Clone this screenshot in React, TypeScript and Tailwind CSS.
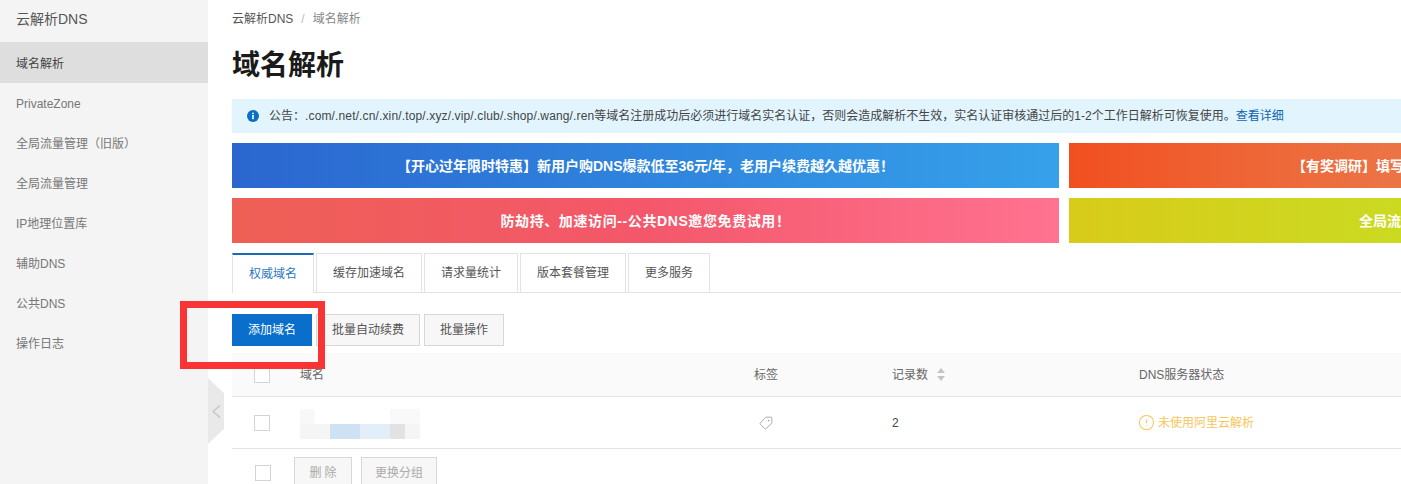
import { CircleAlert, Tag } from 'lucide-react';

// full-width punctuation is written as escapes so it survives copying
const COMMA = '\uFF0C';
const COLON = '\uFF1A';
const BANG = '\uFF01';

const menu = ['域名解析', 'PrivateZone', '全局流量管理\uFF08旧版\uFF09', '全局流量管理', 'IP地理位置库', '辅助DNS', '公共DNS', '操作日志'];
const tabs = [
  { label: '权威域名', width: 'w-[82px]' },
  { label: '缓存加速域名', width: 'w-[106px]' },
  { label: '请求量统计', width: 'w-[94px]' },
  { label: '版本套餐管理', width: 'w-[106px]' },
  { label: '更多服务', width: 'w-[82px]' },
];
const suffixes = '.com/.net/.cn/.xin/.top/.xyz/.vip/.club/.shop/.wang/.ren';
const notice = `等域名注册成功后必须进行域名实名认证${COMMA}否则会造成解析不生效${COMMA}实名认证审核通过后的1-2个工作日解析可恢复使用\u3002`;

function Checkbox() {
  return <span className="block h-4 w-4 border border-[#d4d4d4] bg-white" />;
}

function Sidebar() {
  return (
    <aside className="h-full w-[208px] shrink-0 bg-[#f4f4f4]">
      <div className="flex h-[42px] items-center pb-[4px] pl-4 text-[14px] text-[#555]">云解析DNS</div>
      <ul>
        {menu.map((item, i) => (
          <li
            key={item}
            className={
              i === 0
                ? 'flex h-[41px] items-center bg-[#dedede] pl-4 pt-[3px] text-xs text-[#444]'
                : 'flex h-10 items-center pl-4 pt-[1px] text-xs text-[#777]'
            }
          >
            {item}
          </li>
        ))}
      </ul>
    </aside>
  );
}

function Banners() {
  return (
    <div className="mt-[10px] grid w-[1664px] grid-cols-[827px_827px] gap-[10px] text-sm font-bold text-white">
      <div className="flex h-[45px] items-center justify-center bg-gradient-to-r from-[#2b66cf] to-[#36a1ea]">
        {`【开心过年限时特惠】新用户购DNS爆款低至36元/年${COMMA}老用户续费越久越优惠${BANG}`}
      </div>
      <div className="flex h-[45px] items-center bg-gradient-to-r from-[#f14f1f] to-[#dda171] pl-[223px]">
        【有奖调研】填写
      </div>
      <div className="flex h-[45px] items-center justify-center bg-gradient-to-r from-[#ee5f55] via-[#f4576a] to-[#ff7290] tracking-[0.6px]">
        {`防劫持、加速访问--公共DNS邀您免费试用${BANG}`}
      </div>
      <div className="flex h-[45px] items-center bg-gradient-to-r from-[#d8cb1a] to-[#b2f029] pl-[290px]">全局流</div>
    </div>
  );
}

function Tabs() {
  return (
    <div className="mt-[10px] flex h-10 gap-[2px] border-b border-[#e3e3e3] text-xs text-[#555]">
      {tabs.map((tab, i) => (
        <div
          key={tab.label}
          className={
            i === 0
              ? `flex h-10 items-center justify-center border-x border-t-2 border-x-[#e3e3e3] border-t-[#1c69b5] bg-white text-[#2b78c5] ${tab.width}`
              : `flex h-[39px] items-center justify-center border border-b-0 border-[#e3e3e3] ${tab.width}`
          }
        >
          {tab.label}
        </div>
      ))}
    </div>
  );
}

function Toolbar() {
  const secondary = 'flex h-8 items-center justify-center border border-[#d7d7d7] bg-[#f7f7f7] text-xs text-[#555]';
  return (
    <div className="mt-[21px] flex gap-1">
      <button type="button" className="flex h-8 w-20 items-center justify-center bg-[#0a6fcb] text-xs text-white">
        添加域名
      </button>
      <button type="button" className={`${secondary} w-[104px]`}>批量自动续费</button>
      <button type="button" className={`${secondary} w-20`}>批量操作</button>
    </div>
  );
}

function BlurredName() {
  return (
    <svg width="120" height="32" viewBox="0 0 120 32">
      <rect x="0" y="2" width="15" height="15" fill="#f8f8f8" />
      <rect x="90" y="2" width="30" height="15" fill="#f9f9f9" />
      <rect x="0" y="17" width="30" height="15" fill="#f5f5f5" />
      <rect x="30" y="17" width="30" height="15" fill="#cfe2f4" />
      <rect x="60" y="17" width="30" height="15" fill="#e2eefa" />
      <rect x="90" y="17" width="15" height="15" fill="#e2e2e2" />
      <rect x="105" y="17" width="15" height="15" fill="#f5f5f5" />
    </svg>
  );
}

function DomainTable() {
  const cols = 'grid grid-cols-[68px_454px_138px_247px_1fr] items-center';
  return (
    <div className="mt-[7px] text-xs">
      <div className={`${cols} h-[44px] border-b border-[#e5e5e5] bg-[#fafafa] text-[#666]`}>
        <span className="pl-[22px]"><Checkbox /></span>
        <span>域名</span>
        <span>标签</span>
        <span className="flex items-center gap-[9px]">
          记录数
          <svg width="8" height="13" viewBox="0 0 8 13" fill="#c4c4c4">
            <path d="M4 0 8 5H0Z" />
            <path d="M4 13 8 8H0Z" />
          </svg>
        </span>
        <span>DNS服务器状态</span>
      </div>
      <div className={`${cols} h-[52px] border-b border-[#e5e5e5] text-[#444]`}>
        <span className="pl-[22px]"><Checkbox /></span>
        <BlurredName />
        <span className="pl-[5px]">
          <Tag size={14} strokeWidth={1.2} className="rotate-90 text-[#888]" />
        </span>
        <span>2</span>
        <span className="flex items-center gap-[3px] text-[#f7c65a]">
          <CircleAlert size={17} strokeWidth={1.5} className="-ml-[1px]" />
          未使用阿里云解析
        </span>
      </div>
      <div className="mt-2 flex items-start">
        <span className="ml-[23px] mr-[23px] mt-2"><Checkbox /></span>
        <span className="flex h-8 w-[58px] items-center justify-center border border-[#d7d7d7] bg-[#f7f7f7] pl-[3px] tracking-[3px] text-[#aaa]">删除</span>
        <span className="ml-[9px] flex h-8 w-[76px] items-center justify-center border border-[#d7d7d7] bg-[#f7f7f7] text-[#aaa]">更换分组</span>
      </div>
    </div>
  );
}

export default function App() {
  return (
    <div className="relative flex h-[484px] w-[1401px] overflow-hidden bg-white font-['Liberation_Sans','Noto_Sans_CJK_SC',sans-serif]">
      <Sidebar />
      <main className="min-w-0 flex-1 pl-6">
        <div className="flex h-[38px] items-center text-xs text-[#666]">
          <span className="text-[#555]">云解析DNS</span>
          <span className="mx-[8px] text-[#bbb]">/</span>
          <span className="text-[#888]">域名解析</span>
        </div>
        <h1 className="flex h-[55px] items-center text-[28px] font-bold text-[#1a1a1a]">域名解析</h1>
        <div className="mt-[6px] flex h-[34px] items-center whitespace-nowrap bg-[#e2f5fe] pl-[15px] text-xs text-[#444]">
          <svg width="12" height="12" viewBox="0 0 12 12" className="mr-[10px] shrink-0">
            <circle cx="6" cy="6" r="6" fill="#0a6fc4" />
            <rect x="5.2" y="5" width="1.6" height="4.2" fill="#fff" />
            <rect x="5.2" y="2.7" width="1.6" height="1.5" fill="#fff" />
          </svg>
          {`公告${COLON}`}
          <span className="tracking-[0.14px]">{suffixes}</span>
          {notice}
          <span className="text-[#0f66b0]">查看详细</span>
        </div>
        <Banners />
        <Tabs />
        <Toolbar />
        <DomainTable />
      </main>

      {/* sidebar collapse handle */}
      <div className="absolute left-[208px] top-[378px] flex h-[66px] w-4 items-center justify-center bg-[#e9e9e9] [clip-path:polygon(0_0,100%_23%,100%_77%,0_100%)]">
        <svg width="9" height="13" viewBox="0 0 9 13" fill="none" stroke="#c2c2c2" strokeWidth="1.2">
          <path d="M8 .5 1 6.5l7 6" />
        </svg>
      </div>

      {/* red annotation around the add button */}
      <div className="pointer-events-none absolute left-[180px] top-[301px] h-[68px] w-[145px] border-[7px] border-[#f93434]" />
    </div>
  );
}
